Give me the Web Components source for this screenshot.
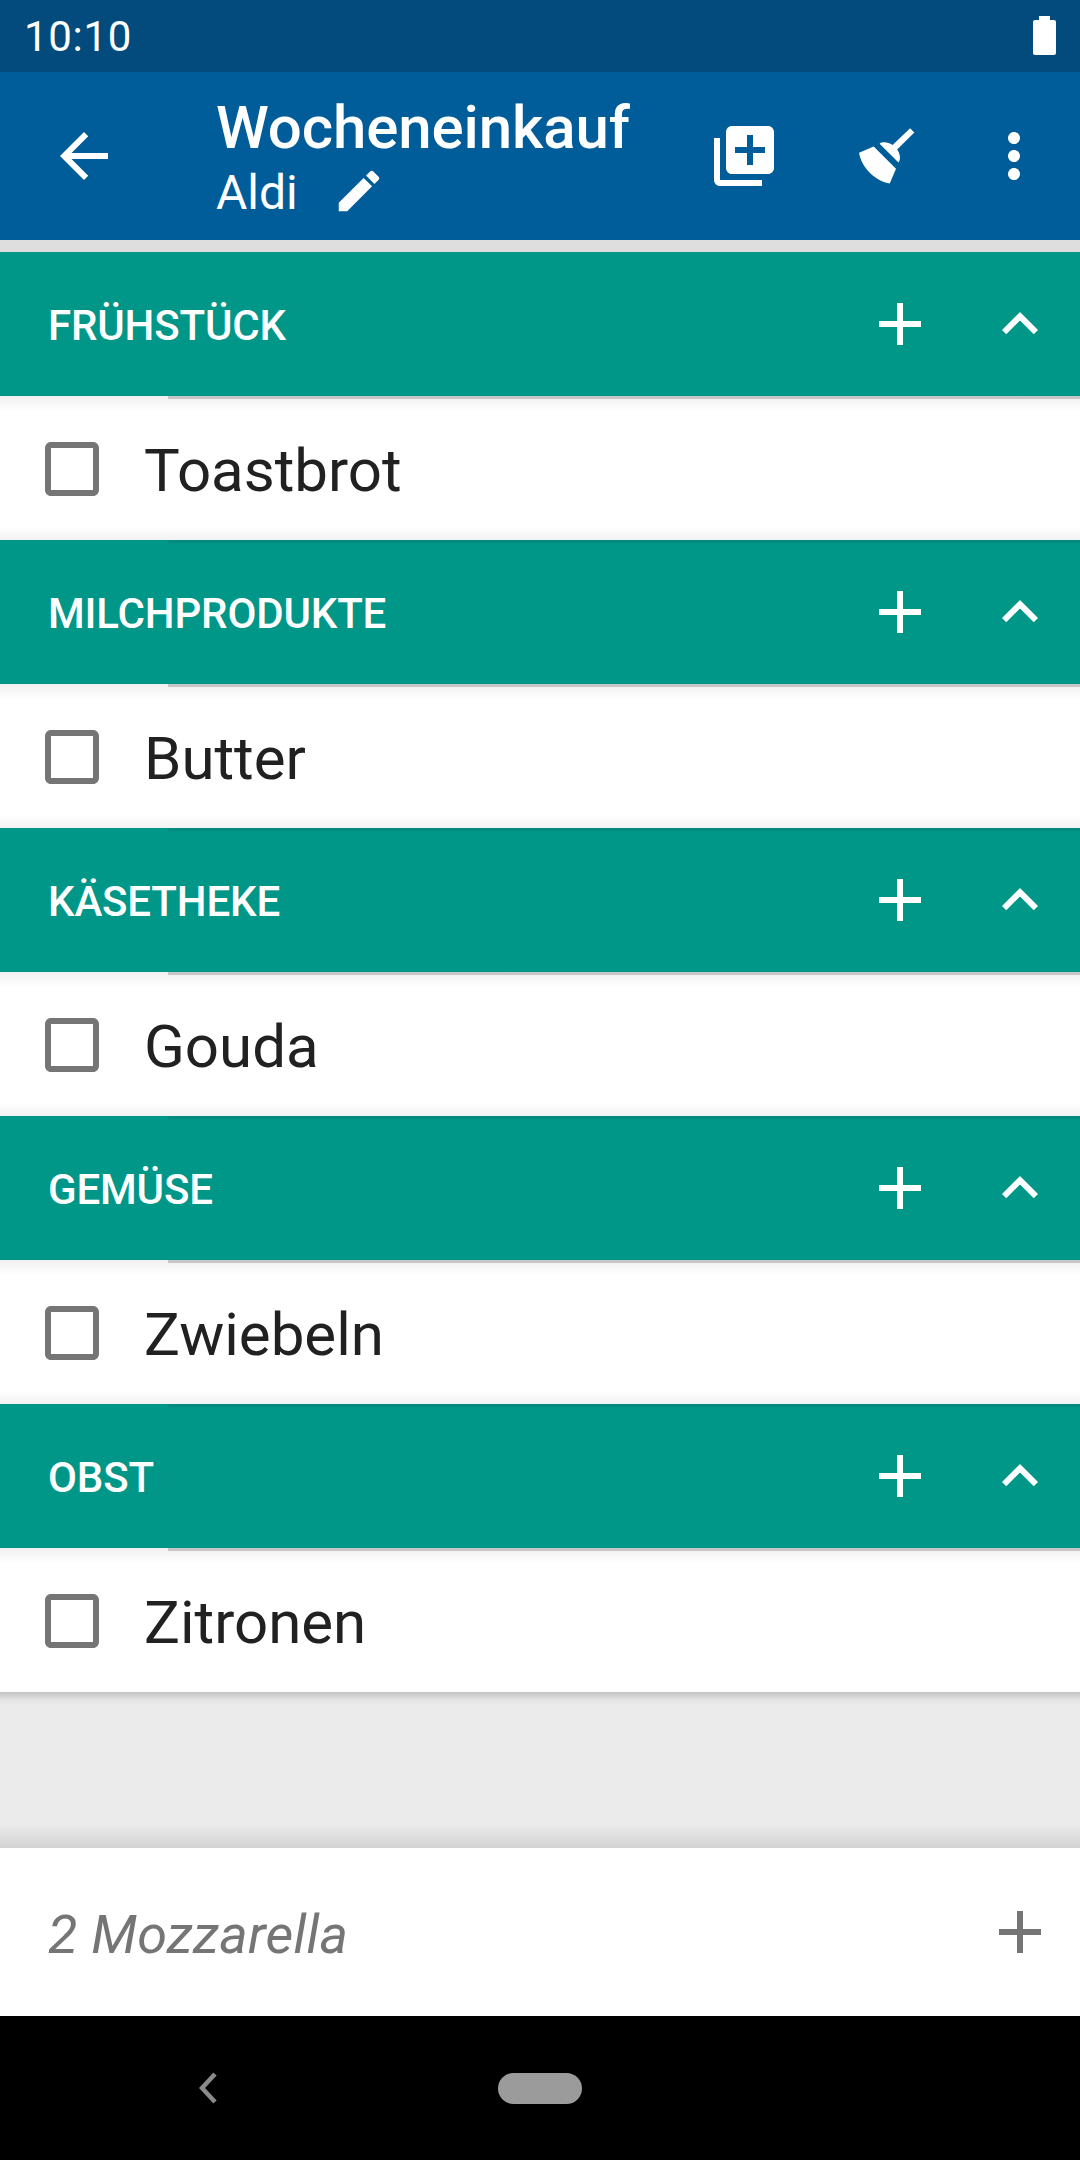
<!DOCTYPE html>
<html>
<head>
<meta charset="utf-8">
<title>Wocheneinkauf</title>
<style>
  html, body { margin: 0; padding: 0; background: #ebebeb; }
  body { width: 1080px; height: 2160px; font-family: Roboto, sans-serif; }
  shopping-app { height: 2160px; }
</style>
</head>
<body>
<shopping-app>
  <status-bar time="10:10"></status-bar>
  <app-toolbar heading="Wocheneinkauf" subtitle="Aldi"></app-toolbar>
  <category-list>
    <shop-category name="FRÜHSTÜCK" first><shop-item>Toastbrot</shop-item></shop-category>
    <shop-category name="MILCHPRODUKTE"><shop-item>Butter</shop-item></shop-category>
    <shop-category name="KÄSETHEKE"><shop-item>Gouda</shop-item></shop-category>
    <shop-category name="GEMÜSE"><shop-item>Zwiebeln</shop-item></shop-category>
    <shop-category name="OBST"><shop-item last>Zitronen</shop-item></shop-category>
  </category-list>
  <add-bar placeholder="2 Mozzarella"></add-bar>
  <nav-bar></nav-bar>
</shopping-app>

<script>
// material + mdi icon paths, all on a 24 unit grid
const ICONS = {
  back: "M20 11H7.83l5.59-5.59L12 4l-8 8 8 8 1.41-1.41L7.83 13H20v-2z",
  library: "M4 6H2v14c0 1.1.9 2 2 2h14v-2H4V6zm16-4H8c-1.1 0-2 .9-2 2v12c0 1.1.9 2 2 2h12c1.1 0 2-.9 2-2V4c0-1.1-.9-2-2-2zm-1 9h-4v4h-2v-4H9V9h4V5h2v4h4v2z",
  broom: "M19.36 2.72L20.78 4.14L15.06 9.85C16.13 11.39 16.29 13.24 15.5 14.19L9.19 7.88C10.15 7.09 12 7.25 13.53 8.32L19.36 2.72M5.93 17.57C3.92 15.56 2.69 13.16 2.35 10.92L7.23 8.83L14.67 16.27L12.58 21.15C10.34 20.81 7.94 19.58 5.93 17.57Z",
  more: "M12 8c1.1 0 2-.9 2-2s-.9-2-2-2-2 .9-2 2 .9 2 2 2zm0 2c-1.1 0-2 .9-2 2s.9 2 2 2 2-.9 2-2-.9-2-2-2zm0 6c-1.1 0-2 .9-2 2s.9 2 2 2 2-.9 2-2-.9-2-2-2z",
  edit: "M3 17.25V21h3.75L17.81 9.94l-3.75-3.75L3 17.25zM20.71 7.04c.39-.39.39-1.02 0-1.41l-2.34-2.34c-.39-.39-1.02-.39-1.41 0l-1.83 1.83 3.75 3.75 1.83-1.83z",
  add: "M19 13h-6v6h-2v-6H5v-2h6V5h2v6h6v2z",
  less: "M12 8l-6 6 1.41 1.41L12 10.83l4.59 4.58L18 14z",
  box: "M19 5v14H5V5h14m0-2H5c-1.1 0-2 .9-2 2v14c0 1.1.9 2 2 2h14c1.1 0 2-.9 2-2V5c0-1.1-.9-2-2-2z"
};

class UiIcon extends HTMLElement {
  connectedCallback() {
    const size = this.getAttribute("size") || 72;
    const path = ICONS[this.getAttribute("name")];
    this.attachShadow({ mode: "open" }).innerHTML = `
    <style>
      :host { display: block; flex: none; width: ${size}px; height: ${size}px; }
      svg { display: block; width: 100%; height: 100%; fill: currentColor; }
    </style>
    <svg viewBox="0 0 24 24"><path d="${path}"/></svg>`;
  }
}

class ShoppingApp extends HTMLElement {
  connectedCallback() {
    this.attachShadow({ mode: "open" }).innerHTML = `
    <style>
      :host { display: flex; flex-direction: column; width: 1080px; background: #ebebeb; }
    </style>
    <slot></slot>`;
  }
}

class StatusBar extends HTMLElement {
  connectedCallback() {
    this.attachShadow({ mode: "open" }).innerHTML = `
    <style>
      :host { display: flex; align-items: center; justify-content: space-between; height: 72px; padding: 0 24px 0 24px; box-sizing: border-box;
        background: #034b7c; color: #fff; font: 400 42px/72px Roboto, sans-serif; }
      span { letter-spacing: .7px; margin-top: 2px; }
      svg { display: block; width: 23px; height: 39px; margin-top: -1px; fill: #fff; }
    </style>
    <span>${this.getAttribute("time")}</span>
    <svg viewBox="0 0 23 39"><path d="M6 0h11v4h4c1.1 0 2 .9 2 2v31c0 1.1-.9 2-2 2H2c-1.1 0-2-.9-2-2V6c0-1.1.9-2 2-2h4z"/></svg>`;
  }
}

class AppToolbar extends HTMLElement {
  connectedCallback() {
    this.attachShadow({ mode: "open" }).innerHTML = `
    <style>
      :host { display: flex; align-items: flex-start; height: 168px; padding: 48px 0 0 48px; box-sizing: border-box;
        background: #015d99; color: #fff; font-family: Roboto, sans-serif; }
      .titles { width: 492px; margin: -34px 0 0 96px; }
      h1 { margin: 0; font: 500 60px/84px Roboto, sans-serif; letter-spacing: -.1px; }
      .sub { display: flex; font: 400 48px/56px Roboto, sans-serif; margin-top: -5px; }
      .sub ui-icon { margin: -1px 0 0 34px; }
      .b { margin-left: 72px; }
      .m { margin-left: 54px; }
    </style>
    <ui-icon name="back"></ui-icon>
    <div class="titles">
      <h1>${this.getAttribute("heading")}</h1>
      <div class="sub"><span>${this.getAttribute("subtitle")}</span><ui-icon name="edit" size="54"></ui-icon></div>
    </div>
    <ui-icon name="library"></ui-icon>
    <ui-icon class="b" name="broom"></ui-icon>
    <ui-icon class="m" name="more"></ui-icon>`;
  }
}

class CategoryList extends HTMLElement {
  connectedCallback() {
    this.attachShadow({ mode: "open" }).innerHTML = `
    <style>
      :host { display: block; height: 1608px; box-sizing: border-box; padding-top: 12px; background: linear-gradient(#dedede, #dedede) top/100% 12px no-repeat, #ebebeb; }
      /* shadow strip of the list's bottom edge, and of the add bar above it */
      .bottom { height: 156px;
        background:
          linear-gradient(rgba(0,0,0,.17), rgba(0,0,0,.03) 8px, rgba(0,0,0,0) 13px) top/100% 14px no-repeat,
          linear-gradient(rgba(0,0,0,0), rgba(0,0,0,.1)) bottom/100% 25px no-repeat; }
    </style>
    <slot></slot>
    <div class="bottom"></div>`;
  }
}

class ShopCategory extends HTMLElement {
  connectedCallback() {
    const topEdge = this.hasAttribute("first") ? "" : `<div class="top"></div>`;
    this.attachShadow({ mode: "open" }).innerHTML = `
    <style>
      :host { display: block; }
      header { display: flex; align-items: center; height: 144px; padding-left: 48px; box-sizing: border-box;
        background: #009688; color: #fff; font: 500 42px/1 Roboto, sans-serif; position: relative; }
      span { flex: 1; padding-top: 3px; letter-spacing: -.15px; }
      .gap { width: 48px; }
      /* edge lines and soft shadow, they start past the left inset */
      .edge { position: absolute; left: 168px; right: 0; top: 100%; height: 3px; background: #c6c6c6; }
      .top { position: absolute; left: 168px; right: 0; top: 0; height: 3px; background: #008a7d; }
      .soft { position: absolute; left: 0; right: 0; top: 100%; height: 16px;
        background: linear-gradient(rgba(0,0,0,.06), rgba(0,0,0,0)); }
    </style>
    <header>
      <span>${this.getAttribute("name")}</span>
      <ui-icon name="add"></ui-icon>
      <div class="gap"></div>
      <ui-icon name="less"></ui-icon>
      <div class="gap" style="width:24px"></div>
      <div class="soft"></div>
      <div class="edge"></div>
      ${topEdge}
    </header>
    <slot></slot>`;
  }
}

class ShopItem extends HTMLElement {
  connectedCallback() {
    // the gradient is the next header's shadow, so the last item has none
    const bg = this.hasAttribute("last") ? "#fff" : "linear-gradient(rgba(0,0,0,0) 130px, rgba(0,0,0,.05)), #fff";
    this.attachShadow({ mode: "open" }).innerHTML = `
    <style>
      :host { display: flex; align-items: center; height: 144px; padding-left: 36px; box-sizing: border-box;
        background: ${bg}; color: #212121; font: 400 60px/1 Roboto, sans-serif; }
      ui-icon { color: #757575; margin: 1px 36px 0 0; }
      .label { padding-top: 5px; }
    </style>
    <ui-icon name="box"></ui-icon>
    <div class="label"><slot></slot></div>`;
  }
}

class AddBar extends HTMLElement {
  connectedCallback() {
    this.attachShadow({ mode: "open" }).innerHTML = `
    <style>
      :host { display: flex; align-items: center; justify-content: space-between; height: 168px; padding: 0 24px 0 48px; box-sizing: border-box;
        background: #fff; color: #757575; font: italic 400 54px/1 Roboto, sans-serif; }
      span { padding-top: 6px; letter-spacing: .25px; }
    </style>
    <span>${this.getAttribute("placeholder")}</span>
    <ui-icon name="add"></ui-icon>`;
  }
}

class NavBar extends HTMLElement {
  connectedCallback() {
    this.attachShadow({ mode: "open" }).innerHTML = `
    <style>
      :host { display: flex; align-items: center; height: 144px; background: #000; padding: 0 0 0 199px; box-sizing: border-box; }
      svg { display: block; width: 18px; height: 32px; }
      .pill { width: 84px; height: 31px; margin-left: 281px; border-radius: 16px; background: #9b9b9b; }
    </style>
    <svg viewBox="0 0 18 32"><path d="M16 2L3 16l13 14" fill="none" stroke="#8a8a8a" stroke-width="4.5"/></svg>
    <div class="pill"></div>`;
  }
}

customElements.define("ui-icon", UiIcon);
customElements.define("shopping-app", ShoppingApp);
customElements.define("status-bar", StatusBar);
customElements.define("app-toolbar", AppToolbar);
customElements.define("category-list", CategoryList);
customElements.define("shop-category", ShopCategory);
customElements.define("shop-item", ShopItem);
customElements.define("add-bar", AddBar);
customElements.define("nav-bar", NavBar);
</script>
</body>
</html>
